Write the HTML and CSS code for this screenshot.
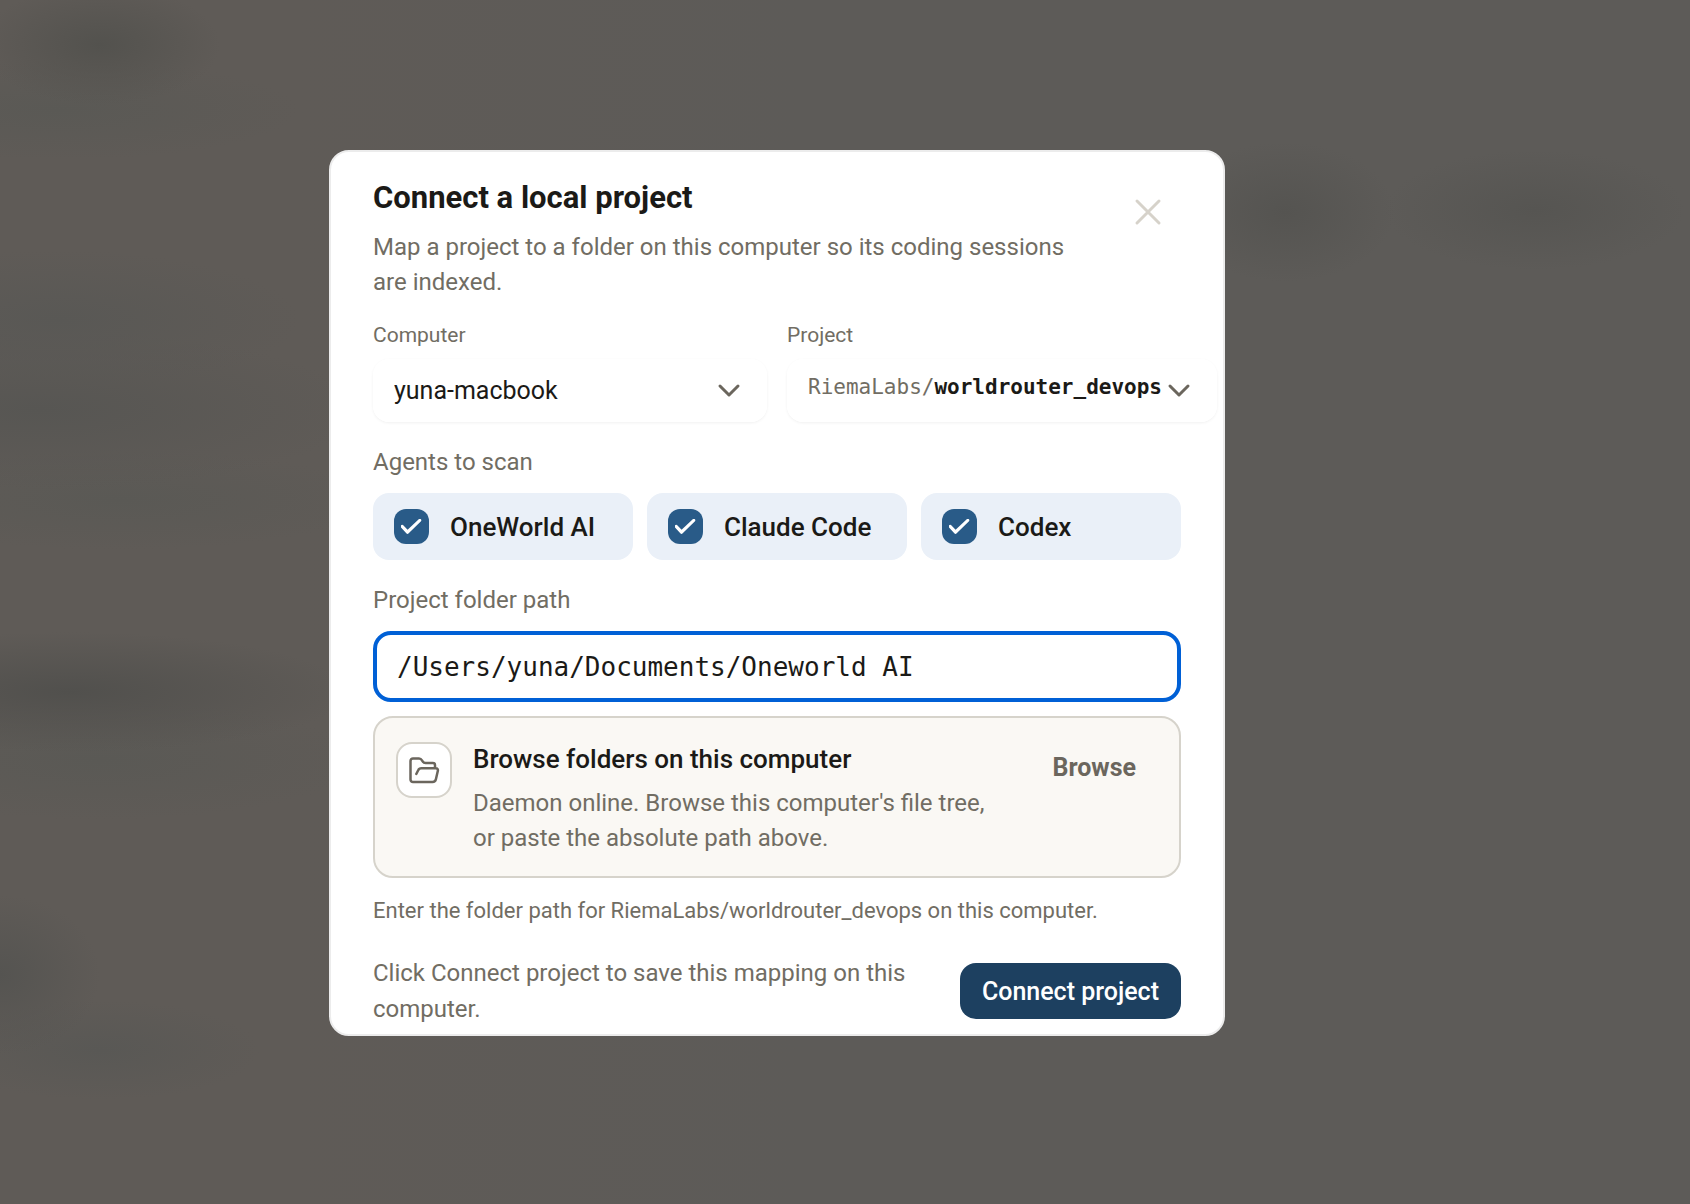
FILE: index.html
```html
<!DOCTYPE html>
<html lang="en">
<head>
    <meta charset="UTF-8">
    <meta name="viewport" content="width=device-width, initial-scale=1.0">
    <title>Connect a local project</title>
    <link rel="stylesheet" href="styles.css">
</head>
<body>

<div class="backdrop">
    <form class="modal" role="dialog" aria-labelledby="modalTitle">
        <header class="modal-header">
            <div class="modal-heading">
                <h2 id="modalTitle">Connect a local project</h2>
                <p class="text">Map a project to a folder on this computer so its coding sessions are indexed.</p>
            </div>
            <button type="button" class="close" aria-label="Close">
                <svg viewBox="0 0 28 28"><path d="M3 3l22 22M25 3L3 25"/></svg>
            </button>
        </header>

        <div class="selects">
            <div class="field">
                <label class="small" for="computer">Computer</label>
                <div class="select">
                    <select id="computer">
                        <option>yuna-macbook</option>
                    </select>
                    <svg class="chevron" viewBox="0 0 24 24"><path d="M3 7l9 9 9-9"/></svg>
                </div>
            </div>
            <div class="field">
                <label class="small" for="project">Project</label>
                <div class="select select-project">
                    <select id="project">
                        <option>RiemaLabs/worldrouter_devops</option>
                    </select>
                    <span class="repo" aria-hidden="true">RiemaLabs/<b>worldrouter_devops</b></span>
                    <svg class="chevron" viewBox="0 0 24 24"><path d="M3 7l9 9 9-9"/></svg>
                </div>
            </div>
        </div>

        <fieldset class="agents">
            <legend class="text">Agents to scan</legend>
            <div class="agent-list">
                <label class="agent"><input type="checkbox" checked>OneWorld AI</label>
                <label class="agent"><input type="checkbox" checked>Claude Code</label>
                <label class="agent"><input type="checkbox" checked>Codex</label>
            </div>
        </fieldset>

        <label class="text path-label" for="folderPath">Project folder path</label>
        <input type="text" id="folderPath" class="path" value="/Users/yuna/Documents/Oneworld AI" spellcheck="false">

        <div class="browse">
            <span class="browse-icon">
                <svg viewBox="0 0 32 28"><path d="M8 26H5a2.500 2.500 0 0 1-2.500-2.500V5A2.500 2.500 0 0 1 5 2.500h6c2 0 2.500 1 3.300 2.300S15.500 7 17.500 7h7.500a2 2 0 0 1 2 2v3M8 26h16.500c2 0 3-1 3.400-2.800l1.900-8.200c.4-1.800-.4-2.700-2-2.700H13.500c-1.800 0-2.700.5-3.300 2L8.300 18"/></svg>
            </span>
            <div class="browse-body">
                <h3>Browse folders on this computer</h3>
                <p class="text">Daemon online. Browse this computer's file tree, or paste the absolute path above.</p>
            </div>
            <button type="button" class="browse-button">Browse</button>
        </div>

        <p class="hint">Enter the folder path for RiemaLabs/worldrouter_devops on this computer.</p>

        <footer class="modal-footer">
            <p class="text">Click Connect project to save this mapping on this computer.</p>
            <button type="submit" class="connect">Connect project</button>
        </footer>
    </form>
</div>

</body>
</html>
```

FILE: styles.css
```css
* {
    box-sizing: border-box;
}
body {
    margin: 0;
    font-family: Roboto, "Liberation Sans", sans-serif;
    color: #1b1a17;
}
h2, h3, p {
    margin: 0;
}
button, input, select {
    font-family: inherit;
}
svg {
    display: block;
    fill: none;
    stroke-linecap: round;
    stroke-linejoin: round;
}

/* dimmed page behind the dialog */
.backdrop {
    display: flex;
    justify-content: center;
    align-items: center;
    min-height: 100vh;
    padding: 0 136px 18px 0;
    background:
        radial-gradient(ellipse 120px 60px at 100px 45px, #53524e, transparent),
        radial-gradient(ellipse 240px 50px at 60px 110px, #5a5955, transparent),
        radial-gradient(ellipse 240px 70px at 60px 320px, #595855, transparent),
        radial-gradient(ellipse 320px 80px at 40px 410px, #575653, transparent),
        radial-gradient(ellipse 260px 50px at 120px 500px, #5a5955, transparent),
        radial-gradient(ellipse 280px 60px at 70px 692px, #51504d, transparent),
        radial-gradient(ellipse 260px 60px at 100px 760px, #5a5955, transparent),
        radial-gradient(ellipse 100px 80px at 0 975px, #555451, transparent),
        radial-gradient(ellipse 160px 50px at 100px 1050px, #595855, transparent),
        radial-gradient(ellipse 110px 70px at 1285px 212px, #555451, transparent),
        radial-gradient(ellipse 150px 60px at 1535px 210px, #565552, transparent),
        linear-gradient(90deg, #5f5b57 300px, #5d5b58 800px);
}

.modal {
    width: 896px;
    max-width: 100%;
    padding: 27px 42px 7px;
    border: 2px solid #ececec;
    border-radius: 20px;
    background: #fff;
}
.text {
    font-size: 24px;
    line-height: 35px;
    color: #716d63;
}
.small {
    font-size: 21px;
    line-height: 28px;
    color: #716d63;
}

.modal-header {
    display: flex;
    justify-content: space-between;
}
.modal-heading {
    flex: 0 1 720px;
}
.modal-heading h2 {
    margin-bottom: 13px;
    font-size: 31px;
    font-weight: 700;
    line-height: 38px;
}
.close {
    width: 56px;
    height: 56px;
    margin: 5px 5px 0 0;
    padding: 14px;
    border: none;
    background: none;
    cursor: pointer;
}
.close svg {
    stroke: #d6d2ca;
    stroke-width: 3;
}

.selects {
    display: flex;
    gap: 20px;
    margin: 21px -36px 0 0;
}
.field {
    flex: 394 1 0;
    display: flex;
    flex-direction: column;
    gap: 10px;
}
.field + .field {
    flex-grow: 430;
}
.select {
    display: grid;
    grid-template-columns: 1fr auto;
    align-items: center;
    border-radius: 16px;
    box-shadow: 0 1px 3px rgba(0, 0, 0, 0.06);
}
.select select {
    grid-area: 1 / 1 / 2 / 3;
    height: 63px;
    padding: 0 21px;
    border: none;
    border-radius: 16px;
    background: #fff;
    color: #1b1a17;
    font-size: 25px;
    appearance: none;
}
.chevron {
    grid-area: 1 / 2;
    width: 24px;
    height: 24px;
    margin-right: 26px;
    stroke: #6b665d;
    stroke-width: 3;
    pointer-events: none;
}
.select-project select {
    color: transparent;
}
.repo {
    grid-area: 1 / 1;
    padding: 0 0 8px 21px;
    color: #716d63;
    font-family: "DejaVu Sans Mono", "Liberation Mono", monospace;
    font-size: 21px;
    white-space: nowrap;
    pointer-events: none;
}
.repo b {
    color: #1b1a17;
}

.agents {
    margin: 23px 0 0;
    padding: 0;
    border: none;
}
.agents legend {
    padding: 0;
}
.agent-list {
    display: grid;
    grid-template-columns: repeat(3, 1fr);
    gap: 14px;
    margin-top: 13px;
}
.agent {
    display: flex;
    align-items: center;
    gap: 21px;
    height: 67px;
    padding: 0 21px;
    border-radius: 16px;
    background: #eaf0f8;
    font-size: 26px;
    font-weight: 500;
    white-space: nowrap;
}
.agent input {
    flex: none;
    display: grid;
    place-items: center;
    width: 35px;
    height: 35px;
    margin: 0;
    border-radius: 12px;
    background: #295b88;
    appearance: none;
}
.agent input:checked::before {
    content: "";
    width: 21px;
    height: 16px;
    background: #fff;
    clip-path: path("M2 6.600a1.600 1.600 0 0 0-2.200 2.200l5.500 6a1.700 1.700 0 0 0 2.400 0L20 2.800A1.500 1.500 0 0 0 18 .600L6.600 11.200z");
}

.path-label {
    display: block;
    margin-top: 23px;
}
.path {
    width: 100%;
    height: 71px;
    margin-top: 13px;
    padding: 0 20px;
    border: 4px solid #0060d6;
    border-radius: 18px;
    outline: none;
    background: #fff;
    color: #1b1a17;
    font-family: "DejaVu Sans Mono", "Liberation Mono", monospace;
    font-size: 26px;
}

.browse {
    display: flex;
    align-items: flex-start;
    gap: 21px;
    margin-top: 14px;
    padding: 23px 21px 20px;
    border: 2px solid #d6d3cb;
    border-radius: 20px;
    background: #faf8f4;
}
.browse-icon {
    flex: none;
    display: grid;
    place-items: center;
    width: 56px;
    height: 56px;
    margin-top: 1px;
    border: 2px solid #d6d3cb;
    border-radius: 16px;
    background: #fff;
}
.browse-icon svg {
    width: 32px;
    height: 28px;
    stroke: #6b665d;
    stroke-width: 2.5;
}
.browse-body {
    flex: 1;
    padding-right: 20px;
}
.browse-body h3 {
    margin-bottom: 9px;
    font-size: 26px;
    font-weight: 500;
    line-height: 36px;
}
.browse-button {
    height: 52px;
    padding: 0 22px;
    border: none;
    background: none;
    color: #6b665d;
    font-size: 25px;
    font-weight: 700;
    cursor: pointer;
}

.hint {
    margin-top: 19px;
    color: #716d63;
    font-size: 22px;
    line-height: 28px;
}
.modal-footer {
    display: flex;
    justify-content: space-between;
    align-items: center;
    gap: 40px;
    margin-top: 30px;
}
.modal-footer .text {
    line-height: 36px;
}
.connect {
    flex: none;
    height: 56px;
    padding: 0 22px;
    border: none;
    border-radius: 16px;
    background: #1d4060;
    color: #fff;
    font-size: 25px;
    font-weight: 500;
    cursor: pointer;
}
```
